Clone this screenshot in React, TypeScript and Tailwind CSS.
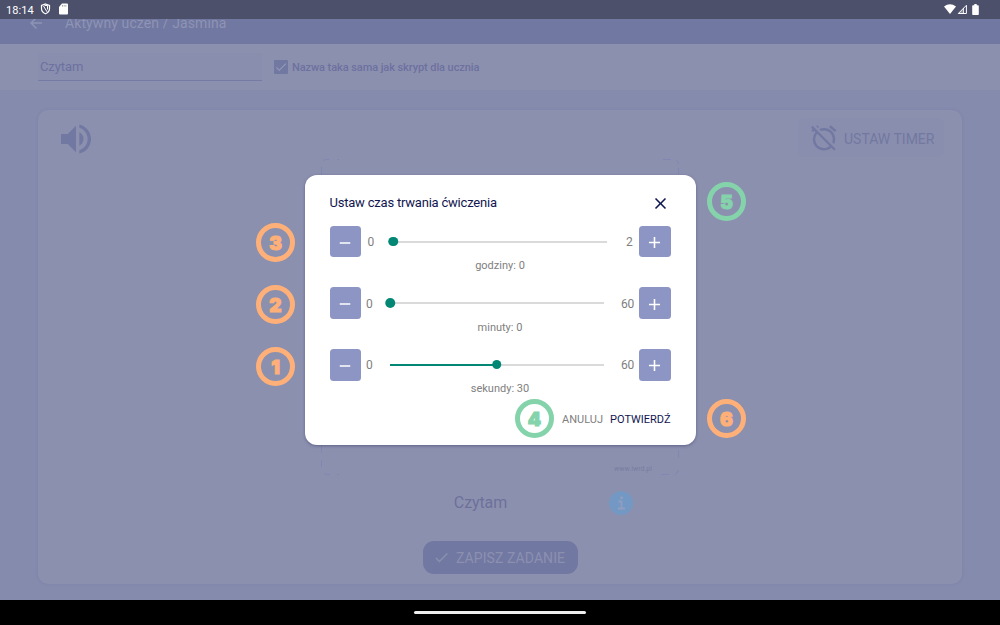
import type { ReactNode } from 'react';
import { MdAdd, MdAlarmOff, MdArrowBack, MdCheck, MdClose, MdRemove, MdVolumeUp } from 'react-icons/md';

function StatusBar() {
  return (
    <div className="absolute inset-x-0 top-0 flex h-[18.500px] items-center bg-[#4c506b] pr-[21px] pl-[6px] text-white">
      <span className="w-[34px] pt-[2px] text-[11px] leading-none tracking-[0.1px]">18:14</span>
      <svg className="h-3 w-[11px]" viewBox="0 0 11 12" fill="none" stroke="currentColor">
        <path d="M5.500 1 9.500 2.500v3c0 2.500-1.600 4.300-4 5.300C3.100 9.800 1.500 8 1.500 5.500v-3z" strokeWidth="1.200" />
        <path d="m3.500 3 3.500 5.800M4.500 2.500h3v4" strokeWidth="1" />
      </svg>
      <svg className="ml-[8px] h-3 w-[9px]" viewBox="0 0 9 12" fill="currentColor">
        <path d="M3 .5h5q1 0 1 1v9q0 1-1 1H1q-1 0-1-1V4z" />
        <path d="M3.500 2v1.600M5.200 2v1.600M6.900 2v1.600" stroke="#4c506b" strokeWidth=".5" />
      </svg>
      <svg className="ml-auto h-[10px] w-3" viewBox="0 0 12 10" fill="currentColor">
        <path d="M0 2.500Q6-2.200 12 2.500L6 10z" />
      </svg>
      <svg className="ml-px h-[10px] w-[10px]" viewBox="0 0 10 10" fill="none" stroke="currentColor">
        <path d="M1.300 9.500 9.400 1.300v8.200z" />
        <path d="M6.500 4v5.500H1.500z" fill="currentColor" stroke="none" opacity=".35" />
        <path d="M6.500 4v5" strokeWidth=".8" />
      </svg>
      <svg className="ml-[5px] h-[11px] w-[7px]" viewBox="0 0 7 11" fill="currentColor">
        <path d="M2.300 0h2.400v1.200h1.300q.8 0 .8.800v8.200q0 .8-.8.800H1q-.8 0-.8-.8V2q0-.8.8-.8h1.300z" />
      </svg>
    </div>
  );
}

function PictureFrame({ children }: { children: ReactNode }) {
  return (
    <div className="relative flex h-[318px] w-[360px] items-end justify-end">
      <svg className="absolute inset-0 h-full w-full" viewBox="0 0 360 318" fill="none" stroke="#7f87b2">
        <path d="M3 2.500Q5 1 9 1.500M17 1.500h2M1.500 9v8M351 1.500h-8M356 2q2 1 2.500 4M358.500 10v6M1.500 287v8M1.500 302v7M4 315.500q2 1.500 6 1M17 316.500h2M358.500 292v8M341 316.500h8M355 316q3-1 3.500-4" />
      </svg>
      {children}
    </div>
  );
}

function StepButton({ children }: { children: ReactNode }) {
  return (
    <button className="flex h-[31.500px] w-[31.500px] shrink-0 items-center justify-center rounded-[3.500px] bg-[#8d95c4] pt-[2px] text-white">
      {children}
    </button>
  );
}

function TimeRow({ label, max, value }: { label: string; max: number; value: number }) {
  const wide = max > 9;
  const position = `${(value / max) * 100}%`;
  return (
    <div className="h-[61.700px]">
      <div className="flex h-[31px] items-center text-[12px] tracking-[-0.200px] text-[#808080]">
        <StepButton><MdRemove size={18} /></StepButton>
        <span className={wide ? 'ml-[5px] w-[24px] pt-px' : 'ml-[6.500px] w-[25.500px] pt-px'}>0</span>
        <div className="relative h-[2px] grow bg-[#dadada]">
          <div className="h-full bg-[#038775]" style={{ width: position }} />
          <div className="absolute -top-[4px] h-[9.500px] w-[9.500px] -translate-x-1/2 rounded-full bg-[#038775]" style={{ left: position }} />
        </div>
        <span className={wide ? 'mr-[5px] w-[30.500px] pt-px text-right' : 'mr-[6.500px] w-[25.500px] pt-px text-right'}>{max}</span>
        <StepButton><MdAdd size={19} /></StepButton>
      </div>
      <div className="pt-px text-center text-[11px] leading-[15px] text-[#808080]">{label}: {value}</div>
    </div>
  );
}

function TimerDialog() {
  return (
    <div className="absolute top-[175px] left-[304.500px] flex h-[269.500px] w-[391px] flex-col rounded-[12px] bg-white px-[25px] shadow-[0_1px_3px_rgba(50,55,100,0.5)]">
      <div className="flex h-[51px] shrink-0 items-center justify-between pt-[4px] text-[#101650]">
        <h2 className="text-[13px] leading-none tracking-[-0.210px]">Ustaw czas trwania ćwiczenia</h2>
        <MdClose className="mt-[2px] mr-[0.500px]" size={19} />
      </div>
      <TimeRow label="godziny" max={2} value={0} />
      <TimeRow label="minuty" max={60} value={0} />
      <TimeRow label="sekundy" max={60} value={30} />
      <div className="flex justify-end gap-[7px] pt-px text-[11px] leading-[15px]">
        <button className="text-[#808080]">ANULUJ</button>
        <button className="text-[#101650]">POTWIERDŹ</button>
      </div>
    </div>
  );
}

function Marker({ place, children }: { place: string; children: ReactNode }) {
  return (
    <div className={`absolute flex h-[39px] w-[39px] items-center justify-center rounded-full border-[5px] border-current ${place}`}>
      <span className="pt-px font-['Inter'] text-[19px] leading-none font-black [-webkit-text-stroke:1px_currentColor]">{children}</span>
    </div>
  );
}

export default function App() {
  return (
    <div className="relative flex h-[625px] w-[1000px] flex-col overflow-hidden bg-[#858bad] font-['Roboto',sans-serif]">
      <header className="flex h-[44px] shrink-0 items-center bg-[#7178a1] pt-[2px] pl-[27px] text-[#8e94b5]">
        <MdArrowBack size={18} />
        <h1 className="ml-[20px] text-[14px] leading-none tracking-[0.100px]">Aktywny uczeń / Jaśmina</h1>
      </header>
      <section className="flex h-[46px] shrink-0 items-center bg-[#8c90af] px-[38px] text-[#6c719f]">
        <div className="flex h-[28px] w-[224px] items-center border-b border-[#747ba5] bg-[#898eae] pl-[2px] text-[13px] tracking-[-0.100px]">Czytam</div>
        <div className="ml-[12px] flex h-[14px] w-[14px] items-center justify-center rounded-[1px] bg-[#7178a1] text-[#9499b8]">
          <MdCheck size={14} />
        </div>
        <span className="ml-[4px] pt-[2px] text-[11px] font-medium tracking-[-0.080px]">Nazwa taka sama jak skrypt dla ucznia</span>
      </section>
      <main className="flex h-[510px] shrink-0 flex-col px-[38px] pt-[20px] pb-[16px]">
        <div className="flex grow flex-col rounded-[10px] bg-[#8c90af] shadow-[0_0_3px_rgba(100,108,155,0.3)]">
          <div className="flex h-[48px] shrink-0 items-start justify-between pt-[8px] pr-[18px] pl-[17.500px] text-[#7178a1]">
            <MdVolumeUp className="mt-px" size={40} />
            <button className="flex h-[39px] w-[146px] items-center rounded-[6px] bg-[#8a8eae] pl-[11px] text-[14px]">
              <MdAlarmOff size={30} />
              <span className="ml-[5px] pt-[3px]">USTAW TIMER</span>
            </button>
          </div>
          <div className="flex justify-center">
            <PictureFrame>
              <span className="mr-[28px] mb-[3px] text-[7px] leading-none text-[#777d9f]">www.iwrd.pl</span>
            </PictureFrame>
          </div>
          <div className="flex h-[54px] items-center justify-center pl-[87px] text-[16px] text-[#6c719a]">
            <span className="tracking-[-0.100px]">Czytam</span>
            <div className="ml-[102px] flex h-6 w-6 items-center justify-center rounded-full bg-[#7398c4] text-[#929dc1]">
              <svg className="h-[14px] w-[9px]" viewBox="0 0 9 14" fill="none" stroke="currentColor" strokeWidth="1.800">
                <path d="M1.500 5.500h3v7M1 12.500h7" />
                <circle cx="4.500" cy="1.700" r="1.500" fill="currentColor" stroke="none" />
              </svg>
            </div>
          </div>
          <div className="flex justify-center pt-[11px]">
            <button className="flex h-[33px] w-[155px] items-center rounded-[11px] bg-[#7178a1] pl-[10px] text-[14px] text-[#8b90b1]">
              <MdCheck size={17} />
              <span className="ml-[6.500px] pt-[2px] tracking-[0.080px]">ZAPISZ ZADANIE</span>
            </button>
          </div>
        </div>
      </main>
      <footer className="flex grow items-center justify-center bg-black">
        <div className="h-[3px] w-[172px] rounded-full bg-[#eeeeee]" />
      </footer>
      <StatusBar />
      <TimerDialog />
      <Marker place="left-[256px] top-[223px] text-[#ffb078]">3</Marker>
      <Marker place="left-[256px] top-[285px] text-[#ffb078]">2</Marker>
      <Marker place="left-[256px] top-[347px] text-[#ffb078]">1</Marker>
      <Marker place="left-[515px] top-[399px] text-[#84d3aa]">4</Marker>
      <Marker place="left-[707px] top-[182px] text-[#84d3aa]">5</Marker>
      <Marker place="left-[707px] top-[399px] text-[#ffb078]">6</Marker>
    </div>
  );
}
